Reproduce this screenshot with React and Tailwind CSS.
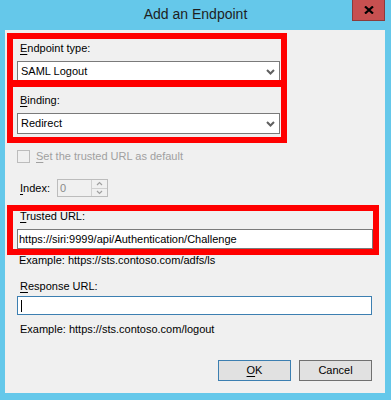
import React from 'react';

const font = { fontFamily: '"Liberation Sans", Arial, sans-serif' };

const Chevron = () => (
  <svg width="9" height="6" viewBox="0 0 9 6" className="block">
    <polyline points="1,1 4.5,4.5 8,1" fill="none" stroke="#606060" strokeWidth="2" />
  </svg>
);

const Combo = ({ value }) => (
  <div className="flex h-[21px] w-[263px] items-center justify-between border border-[#7a7a7a] bg-white pl-[3px] pr-[4px] text-[11px] leading-[13px] text-black">
    <span>{value}</span>
    <Chevron />
  </div>
);

const Label = ({ k, rest, className = '' }) => (
  <div className={`ml-[3px] text-[11px] leading-[13px] text-black ${className}`}>
    <span className="underline underline-offset-2">{k}</span>
    {rest}
  </div>
);

const SpinArrow = ({ up }) => (
  <svg width="7" height="5" viewBox="0 0 7 5" className="block">
    <polyline
      points={up ? '1,4 3.5,1.5 6,4' : '1,1 3.5,3.5 6,1'}
      fill="none"
      stroke="#a0a0a0"
      strokeWidth="1.2"
    />
  </svg>
);

export default function App() {
  return (
    <div className="h-[400px] w-[391px] bg-[#65c8ea]" style={font}>
      {/* title bar */}
      <div className="relative flex h-[30px] items-start justify-center pt-[6px]">
        <span className="text-[14px] leading-[16px] text-[#1e1e1e]">Add an Endpoint</span>
        <div className="absolute right-[6px] top-0 flex h-[21px] w-[33px] items-center justify-center border border-t-0 border-[#8c3b3b] bg-[#c75050]">
          <svg width="10" height="8" viewBox="0 0 10 8" className="block">
            <path d="M1 0.5 L9 7.5 M9 0.5 L1 7.5" stroke="#000" strokeWidth="2.2" />
          </svg>
        </div>
      </div>

      {/* dialog body */}
      <div className="relative ml-[5px] h-[363px] w-[380px] bg-[#f0f0f0] pl-[12px] pt-[12px]">
        <Label k="E" rest="ndpoint type:" />
        <div className="mt-[6px]">
          <Combo value="SAML Logout" />
        </div>

        <Label k="B" rest="inding:" className="mt-[12px]" />
        <div className="mt-[6px]">
          <Combo value="Redirect" />
        </div>

        <div className="mt-[16px] flex h-[13px] items-center gap-[6px]">
          <div className="h-[13px] w-[13px] border border-[#bcbcbc] bg-[#f0f0f0]" />
          <span className="text-[11px] leading-[13px] text-[#a0a0a0]">
            <span className="underline underline-offset-2">S</span>et the trusted URL as default
          </span>
        </div>

        <div className="mt-[16px] flex h-[18px] items-center">
          <span className="ml-[3px] w-[37px] text-[11px] leading-[13px] text-black">
            <span className="underline underline-offset-2">I</span>ndex:
          </span>
          <div className="flex h-[18px] w-[51px] border border-[#bcbcbc] bg-[#f0f0f0]">
            <span className="flex-1 pl-[2px] text-[11px] leading-[16px] text-[#8a8a8a]">0</span>
            <div className="flex w-[16px] flex-col border-l border-[#d0d0d0]">
              <div className="flex flex-1 items-center justify-center border-b border-[#d0d0d0]">
                <SpinArrow up />
              </div>
              <div className="flex flex-1 items-center justify-center">
                <SpinArrow />
              </div>
            </div>
          </div>
        </div>

        <Label k="T" rest="rusted URL:" className="mt-[13px]" />
        <div className="mt-[6px] flex h-[20px] w-[356px] items-center border border-[#7a7a7a] bg-white pl-[1px] text-[11px] leading-[13px] text-black">
          https://siri:9999/api/Authentication/Challenge
        </div>
        <div className="ml-[2px] mt-[5px] text-[11px] leading-[13px] text-black">
          Example: https://sts.contoso.com/adfs/ls
        </div>

        <Label k="R" rest="esponse URL:" className="mt-[13px]" />
        <div className="mt-[3px] flex h-[19px] w-[355px] items-center border border-[#3c7fb1] bg-white pl-[3px]">
          <div className="h-[12px] w-px bg-black" />
        </div>
        <div className="ml-[3px] mt-[8px] text-[11px] leading-[13px] text-black">
          Example: https://sts.contoso.com/logout
        </div>

        <div className="mr-[13px] mt-[24px] flex justify-end gap-[8px]">
          <button className="flex h-[21px] w-[73px] items-center justify-center border border-[#3c7fb1] bg-[#e1e1e1] text-[11px] leading-[13px] text-black">
            <span className="underline underline-offset-2">O</span>K
          </button>
          <button className="flex h-[21px] w-[73px] items-center justify-center border border-[#707070] bg-[#e1e1e1] text-[11px] leading-[13px] text-black">
            Cancel
          </button>
        </div>

        {/* red annotation boxes drawn over the dialog */}
        <div className="pointer-events-none absolute left-[2px] top-[3px] h-[54px] w-[280px] border-[6px] border-[#ff0000]" />
        <div className="pointer-events-none absolute left-[2px] top-[50px] h-[63px] w-[280px] border-[6px] border-[#ff0000]" />
        <div className="pointer-events-none absolute left-[2px] top-[175px] h-[50px] w-[372px] border-[6px] border-[#ff0000]" />
      </div>
    </div>
  );
}
